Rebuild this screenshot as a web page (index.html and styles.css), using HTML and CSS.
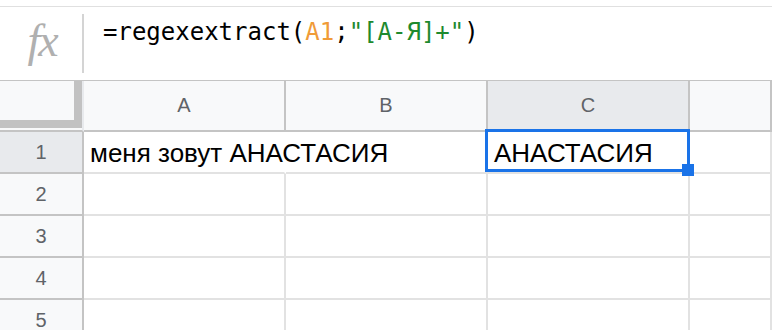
FILE: index.html
```html
<!DOCTYPE html>
<html lang="ru">
<head>
    <meta charset="UTF-8">
    <title>Sheet</title>
    <link rel="stylesheet" href="styles.css">
</head>
<body>
    <div class="formula-bar">
        <div class="fx">fx</div>
        <div class="divider"></div>
        <div class="formula">=regexextract(<span class="ref">A1</span>;<span class="str">"[А-Я]+"</span>)</div>
    </div>

    <div class="sheet">
        <div class="corner"><div class="freeze"></div></div>
        <div class="col-head">A</div>
        <div class="col-head">B</div>
        <div class="col-head active">C</div>
        <div class="col-head"></div>

        <div class="row-head active">1</div>
        <div class="cell text spill">меня зовут АНАСТАСИЯ</div>
        <div class="cell"></div>
        <div class="cell text selected">АНАСТАСИЯ<span class="handle"></span></div>
        <div class="cell"></div>

        <div class="row-head">2</div>
        <div class="cell"></div><div class="cell"></div><div class="cell"></div><div class="cell"></div>
        <div class="row-head">3</div>
        <div class="cell"></div><div class="cell"></div><div class="cell"></div><div class="cell"></div>
        <div class="row-head">4</div>
        <div class="cell"></div><div class="cell"></div><div class="cell"></div><div class="cell"></div>
        <div class="row-head">5</div>
        <div class="cell"></div><div class="cell"></div><div class="cell"></div><div class="cell"></div>
    </div>
</body>
</html>
```

FILE: styles.css
```css
body { margin: 0; padding: 0; background: #fff; font-family: "Liberation Sans", Arial, sans-serif; overflow: hidden; }

/* formula bar */
.formula-bar {
    margin-top: 6px;
    height: 73px;
    border-top: 1px solid #e0e0e0;
    border-bottom: 1px solid #c4c4c4;
    display: flex;
    align-items: stretch;
}
.fx {
    width: 82px;
    padding-left: 2px;
    box-sizing: border-box;
    text-align: center;
    font-family: "Liberation Serif", serif;
    font-style: italic;
    font-size: 46px;
    line-height: 68px;
    color: #b0b0b0;
    letter-spacing: -2px;
}
.divider { width: 2px; background: #d4d4d4; margin: 7px 0; }
.formula {
    padding-left: 19px;
    font-family: "DejaVu Sans Mono", monospace;
    font-size: 24px;
    line-height: 50px;
    color: #000;
}
.ref { color: #f09b38; }
.str { color: #1e8a2e; }

/* grid */
.sheet {
    display: grid;
    grid-template-columns: 84px 202px 202px 202px 1fr;
    grid-template-rows: 51px repeat(5, 42px);
}
.sheet > div { box-sizing: border-box; }
.corner {
    background: #f8f9fa;
    border-right: 2px solid #e8eaed;
    border-bottom: 2px solid #c4c4c4;
}
.freeze {
    height: 47px;
    box-sizing: border-box;
    border-right: 8px solid #c2c2c2;
    border-bottom: 8px solid #c2c2c2;
}
.col-head, .row-head {
    background: #f8f9fa;
    color: #5f6368;
    font-size: 20px;
    display: flex;
    align-items: center;
    justify-content: center;
    border-right: 2px solid #c4c4c4;
    border-bottom: 2px solid #c4c4c4;
}
.col-head.active, .row-head.active { background: #e8eaed; }
.cell {
    border-right: 2px solid #e2e2e2;
    border-bottom: 2px solid #e2e2e2;
    position: relative;
}
.text {
    font-size: 26px;
    color: #000;
    padding: 1px 6px 0;
    line-height: 40px;
    white-space: nowrap;
    overflow: visible;
}
/* text runs on into the empty cell B1, so the line between is hidden */
.spill { border-right-color: #fff; z-index: 1; }
.selected::before {
    content: "";
    position: absolute;
    left: -3px;
    top: -3px;
    width: 205px;
    height: 43px;
    box-sizing: border-box;
    border: 3px solid #1a73e8;
}
.handle {
    position: absolute;
    left: 194px;
    top: 32px;
    width: 12px;
    height: 12px;
    background: #1a73e8;
    z-index: 2;
}
```
